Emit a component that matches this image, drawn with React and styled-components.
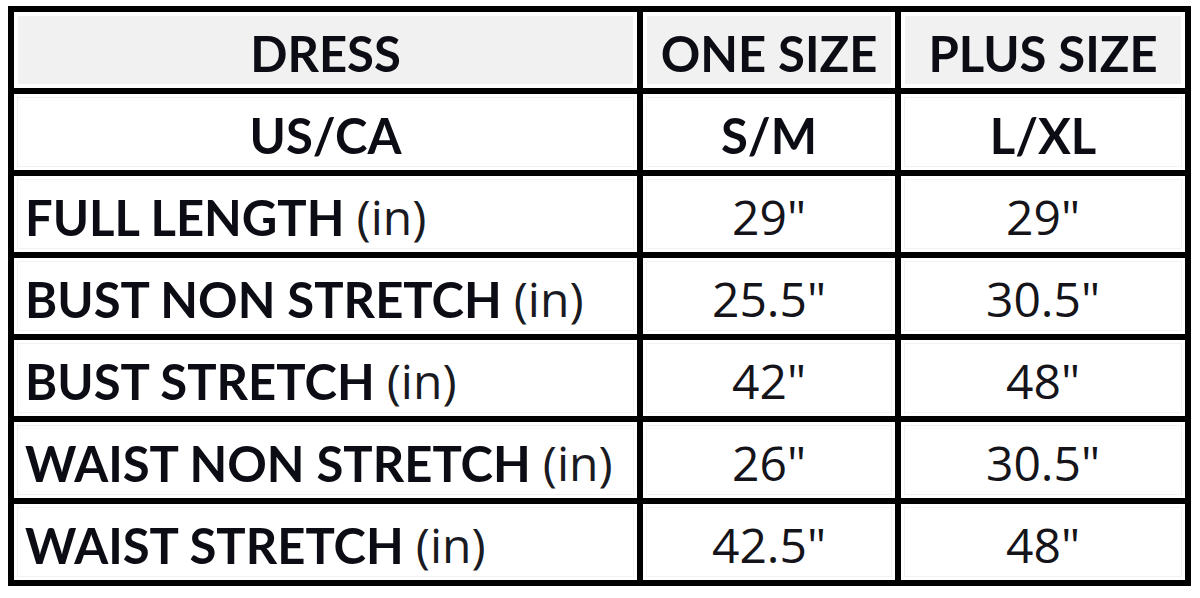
import React from "react";
import styled, { createGlobalStyle } from "styled-components";

const Global = createGlobalStyle`
  html, body { margin: 0; padding: 0; background: #ffffff; }
  body { width: 1200px; height: 598px; overflow: hidden; }
`;

const Page = styled.div`
  width: 1200px;
  height: 598px;
  padding: 6px 0 0 8px;
  box-sizing: border-box;
  background: #fff;
`;

const Table = styled.div`
  display: grid;
  grid-template-columns: 623px 252px 284px;
  grid-auto-rows: 76px;
  gap: 6px;
  padding: 6px;
  background: #000;
  width: max-content;
`;

const Cell = styled.div`
  display: flex;
  align-items: center;
  justify-content: ${(p) => (p.$left ? "flex-start" : "center")};
  padding: ${(p) => (p.$left ? "5px 0 0 11px" : "5px 0 0 0")};
  box-sizing: border-box;
  background: ${(p) => (p.$head ? "#f1f1f1" : "#ffffff")};
  box-shadow: ${(p) =>
    p.$head ? "inset 0 0 0 4px #ffffff" : "inset 0 0 0 3px #ffffff, inset 0 0 0 4px #f2f2f2"};
  font-family: "Lato", "Open Sans", sans-serif;
  font-size: 49px;
  color: #0c0c14;
  white-space: nowrap;
`;

const Bold = styled.span`
  font-weight: 700;
`;

const Unit = styled.span`
  font-family: "Open Sans", sans-serif;
  font-weight: 400;
  font-size: 48px;
  margin-left: 12px;
  color: #1a1a22;
`;

const Value = styled.span`
  font-family: "Open Sans", sans-serif;
  font-weight: 400;
  font-size: 48px;
  color: #14141a;
`;

const rows = [
  ["FULL LENGTH", '29"', '29"'],
  ["BUST NON STRETCH", '25.5"', '30.5"'],
  ["BUST STRETCH", '42"', '48"'],
  ["WAIST NON STRETCH", '26"', '30.5"'],
  ["WAIST STRETCH", '42.5"', '48"'],
];

export default function App() {
  return (
    <Page>
      <Global />
      <Table>
        <Cell $head><Bold>DRESS</Bold></Cell>
        <Cell $head><Bold>ONE SIZE</Bold></Cell>
        <Cell $head><Bold>PLUS SIZE</Bold></Cell>
        <Cell><Bold>US/CA</Bold></Cell>
        <Cell><Bold>S/M</Bold></Cell>
        <Cell><Bold>L/XL</Bold></Cell>
        {rows.map(([label, a, b]) => (
          <React.Fragment key={label}>
            <Cell $left>
              <Bold>{label}</Bold>
              <Unit>(in)</Unit>
            </Cell>
            <Cell><Value>{a}</Value></Cell>
            <Cell><Value>{b}</Value></Cell>
          </React.Fragment>
        ))}
      </Table>
    </Page>
  );
}
